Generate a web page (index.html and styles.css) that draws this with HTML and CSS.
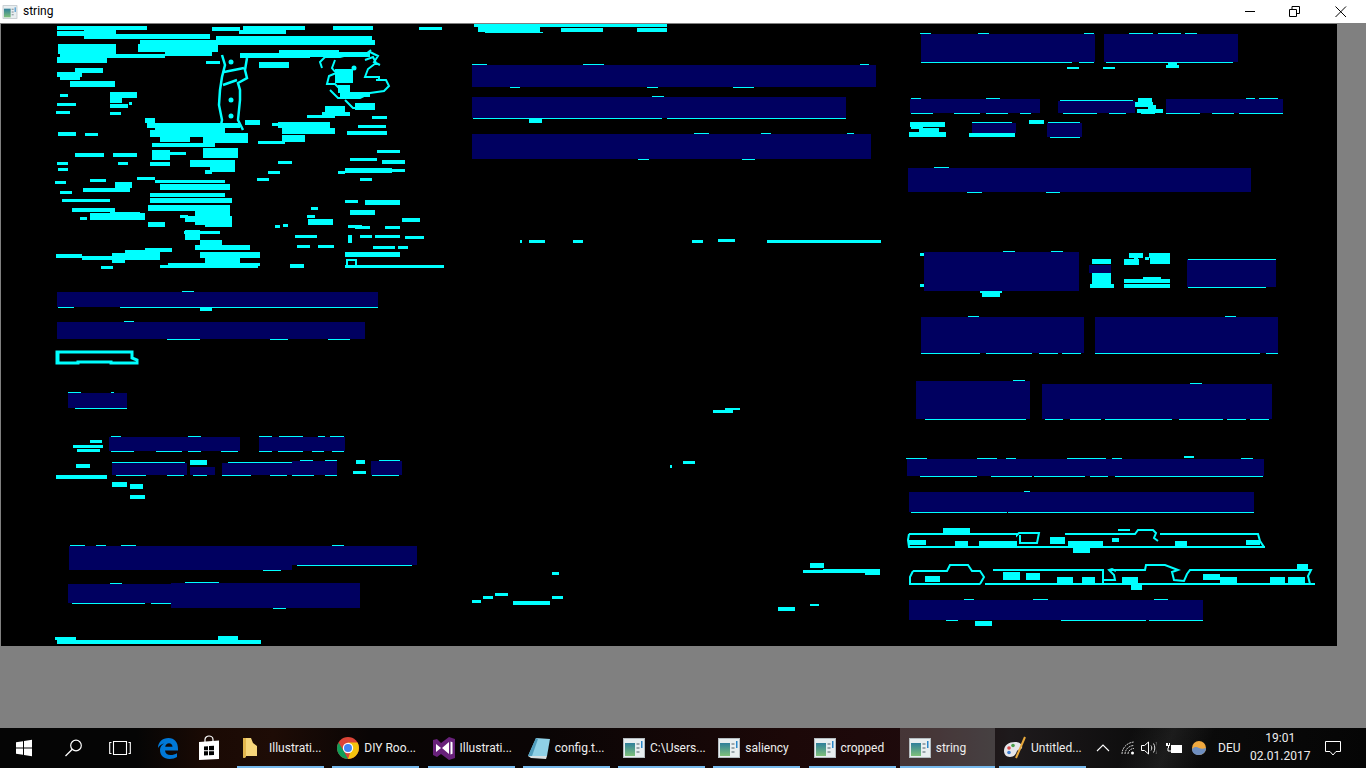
FILE: index.html
```html
<!DOCTYPE html>
<html lang="en">
<head>
<meta charset="utf-8">
<title>string</title>
<link rel="stylesheet" href="styles.css">
</head>
<body>
<svg class="defs" width="0" height="0" aria-hidden="true">
  <defs>
    <linearGradient id="pane" x1="0" y1="0" x2="0" y2="1">
      <stop offset="0" stop-color="#2f7f9a"/><stop offset="1" stop-color="#7fc07a"/>
    </linearGradient>
    <symbol id="appwin" viewBox="0 0 24 24">
      <rect x="1.500" y="2.500" width="21" height="19" fill="#e8eef0" stroke="#b4bcc0"/>
      <rect x="3" y="7" width="10" height="13" fill="url(#pane)"/>
      <rect x="14.500" y="7" width="3" height="2" fill="#9aa6ac"/>
      <rect x="14.500" y="11" width="3" height="2" fill="#9aa6ac"/>
      <rect x="14.500" y="15" width="3" height="2" fill="#9aa6ac"/>
      <rect x="19" y="5" width="1.500" height="7" fill="#2a86c8"/>
    </symbol>
  </defs>
</svg>

<header class="titlebar">
  <svg class="title-icon" viewBox="0 0 24 24"><use href="#appwin"/></svg>
  <span class="title-text">string</span>
  <div class="win-buttons">
    <button class="win-btn" aria-label="Minimize"><svg width="12" height="12" viewBox="0 0 12 12"><path d="M2 5.500h10" stroke="#000" fill="none"/></svg></button>
    <button class="win-btn" aria-label="Restore"><svg width="12" height="12" viewBox="0 0 12 12"><path d="M.500 3.500h7v7h-7zM3 3.500V.500h7.500v7H7.500" stroke="#000" fill="none"/></svg></button>
    <button class="win-btn" aria-label="Close"><svg width="12" height="12" viewBox="0 0 12 12"><path d="M.500.500l10.500 10.500M11 .500L.500 11" stroke="#000" fill="none"/></svg></button>
  </div>
</header>

<main class="workspace">
  <svg class="canvas" viewBox="1 24 1336 622" width="1336" height="622" shape-rendering="crispEdges">
    <path class="navy" d="M921 34h174v28h-174zM1104 34h134v28h-134zM910 99h130v14h-130zM1058 101h77v12h-77zM1166 99h117v14h-117zM972 123h44v10h-44zM1047 123h35v14h-35zM908 168h343v24h-343zM924 252h155v39h-155zM1089 265h22v8h-22zM1187 259h89v28h-89zM921 317h163v36h-163zM1095 317h183v36h-183zM916 381h114v38h-114zM1042 384h230v35h-230zM907 459h357v17h-357zM909 492h345v20h-345zM909 600h294v20h-294zM472 65h404v22h-404zM472 97h374v21h-374zM472 134h399v25h-399zM57 292h321v15h-321zM57 322h308v17h-308zM68 393h59v15h-59zM109 437h131v14h-131zM259 437h86v14h-86zM112 463h75v12h-75zM190 467h25v8h-25zM222 463h70v12h-70zM292 461h45v14h-45zM371 461h31v14h-31zM69 546h223v24h-223zM292 546h125v19h-125zM68 584h103v19h-103zM171 583h189v25h-189z"/>

    <!-- thin edges round the filled regions -->
    <path class="cyan" d="M920 33h11v1h-11zM978 33h11v1h-11zM1084 33h10v1h-10zM921 62h151v1h-151zM1079 62h15v1h-15zM1129 33h24v1h-24zM1158 33h23v1h-23zM1185 33h12v1h-12zM1106 62h127v1h-127zM911 98h10v1h-10zM986 98h14v1h-14zM911 113h22v1h-22zM954 113h26v1h-26zM986 113h22v1h-22zM1020 113h11v1h-11zM1060 100h73v1h-73zM1063 113h34v1h-34zM1109 113h17v1h-17zM1246 98h9v1h-9zM1259 98h19v1h-19zM1166 113h34v1h-34zM1212 113h22v1h-22zM1239 113h44v1h-44zM972 122h40v1h-40zM1048 122h32v1h-32zM1050 137h30v1h-30zM934 167h15v1h-15zM967 192h15v1h-15zM1046 192h14v1h-14zM1003 251h12v1h-12zM1051 251h12v1h-12zM1188 259h88v1h-88zM1188 287h78v1h-78zM968 316h11v1h-11zM921 353h59v1h-59zM986 353h46v1h-46zM1039 353h19v1h-19zM1062 353h19v1h-19zM1225 316h11v1h-11zM1095 353h165v1h-165zM1266 353h12v1h-12zM1013 380h12v1h-12zM925 419h101v1h-101zM1190 383h12v1h-12zM1045 419h18v1h-18zM1070 419h31v1h-31zM1105 419h67v1h-67zM1179 419h44v1h-44zM1227 419h19v1h-19zM1250 419h19v1h-19zM906 458h21v1h-21zM977 458h20v1h-20zM1006 458h10v1h-10zM1067 458h39v1h-39zM1112 458h10v1h-10zM1241 458h12v1h-12zM920 476h57v1h-57zM991 476h41v1h-41zM1034 476h51v1h-51zM1090 476h18v1h-18zM1115 476h148v1h-148zM1024 491h6v1h-6zM911 512h96v1h-96zM1008 512h246v1h-246zM964 599h10v1h-10zM1033 599h15v1h-15zM1154 599h14v1h-14zM946 620h12v1h-12zM1061 620h85v1h-85zM1149 620h54v1h-54zM472 64h15v1h-15zM583 64h21v1h-21zM860 64h9v1h-9zM510 87h10v1h-10zM647 87h11v1h-11zM733 87h21v1h-21zM652 96h12v1h-12zM473 118h189v1h-189zM667 118h179v1h-179zM694 133h15v1h-15zM761 133h10v1h-10zM847 133h7v1h-7zM638 159h11v1h-11zM742 159h13v1h-13zM58 307h16v1h-16zM120 307h258v1h-258zM182 291h12v1h-12zM124 321h10v1h-10zM167 339h33v1h-33zM270 339h18v1h-18zM328 339h22v1h-22zM68 392h13v1h-13zM111 392h3v1h-3zM75 408h52v1h-52zM111 436h10v1h-10zM188 436h13v1h-13zM111 451h23v1h-23zM156 451h26v1h-26zM188 451h13v1h-13zM221 451h17v1h-17zM259 436h13v1h-13zM279 436h24v1h-24zM318 436h7v1h-7zM330 436h14v1h-14zM259 451h13v1h-13zM278 451h25v1h-25zM312 451h12v1h-12zM332 451h12v1h-12zM112 462h73v1h-73zM116 475h30v1h-30zM167 475h17v1h-17zM193 475h14v1h-14zM228 462h64v1h-64zM222 475h29v1h-29zM270 475h17v1h-17zM292 475h22v1h-22zM325 475h12v1h-12zM300 460h13v1h-13zM325 460h12v1h-12zM379 460h21v1h-21zM372 475h27v1h-27zM70 545h15v1h-15zM96 545h10v1h-10zM121 545h15v1h-15zM332 545h12v1h-12zM263 570h18v1h-18zM297 565h115v1h-115zM110 583h12v1h-12zM72 603h73v1h-73zM151 603h20v1h-20zM185 582h34v1h-34zM273 608h13v1h-13z"/>

    <!-- solid blobs, right column -->
    <path class="cyan" d="M1067 67h12v2h-12zM1103 67h12v2h-12zM1168 63h9v2h-9zM1166 65h13v3h-13zM1138 98h14v4h-14zM1135 102h18v5h-18zM1148 105h8v4h-8zM1137 109h26v4h-26zM1141 113h14v1h-14zM910 122h35v5h-35zM911 127h12v2h-12zM909 132h37v5h-37zM919 128h20v5h-20zM969 133h46v4h-46zM1029 120h15v4h-15zM920 253h4v3h-4zM920 284h4v3h-4zM980 291h22v2h-22zM982 293h18v4h-18zM1092 259h19v5h-19zM1092 273h19v15h-19zM1090 284h24v4h-24zM1129 253h14v5h-14zM1124 259h15v6h-15zM1134 258h4v2h-4zM1149 253h21v5h-21zM1150 258h20v6h-20zM1145 257h4v3h-4zM1124 279h46v4h-46zM1124 284h46v4h-46zM1143 277h18v3h-18zM1184 456h10v2h-10zM975 621h17v5h-17z"/>

    <!-- solid blobs, middle column -->
    <path class="cyan" d="M474 24h193v3h-193zM478 27h62v5h-62zM485 32h58v1h-58zM561 28h42v4h-42zM637 28h30v4h-30zM529 119h13v4h-13zM520 240h2v3h-2zM529 240h16v3h-16zM573 240h10v3h-10zM692 240h11v3h-11zM718 239h17v3h-17zM767 240h114v3h-114zM725 408h15v2h-15zM713 410h20v3h-20zM683 461h12v3h-12zM670 465h2v3h-2zM552 572h7v3h-7zM472 600h9v3h-9zM483 596h10v3h-10zM495 593h13v3h-13zM513 601h37v4h-37zM552 596h11v3h-11zM810 563h14v5h-14zM803 570h20v3h-20zM823 569h57v4h-57zM865 571h15v4h-15zM778 607h17v4h-17zM810 604h9v2h-9z"/>

    <!-- solid blobs, bottom rows of the left column -->
    <path class="cyan" d="M200 308h12v3h-12zM90 440h12v3h-12zM73 445h30v3h-30zM77 449h23v3h-23zM76 464h14v4h-14zM56 475h51v4h-51zM112 482h15v5h-15zM130 484h13v5h-13zM130 495h15v4h-15zM190 460h17v5h-17zM356 460h9v4h-9zM353 471h13v3h-13zM57 640h204v4h-204zM55 637h21v3h-21zM218 636h20v4h-20z"/>

    <!-- dense upper-left field -->
    <path class="cyan blob" d="M58 27h88v2h-88zM58 32h26v3h-26zM85 30h30v4h-30zM85 35h124v3h-124zM213 28h26v2h-26zM244 27h60v2h-60zM240 31h45v2h-45zM334 27h38v2h-38zM420 28h21v1h-21zM217 37h154v2h-154zM141 41h233v3h-233zM59 45h56v8h-56zM61 54h53v3h-53zM58 58h48v4h-48zM101 55h63v2h-63zM139 45h78v6h-78zM166 53h45v2h-45zM241 54h68v3h-68zM280 51h58v5h-58zM331 53h38v3h-38zM207 62h12v1h-12zM260 63h28v4h-28zM76 69h26v3h-26zM58 73h23v3h-23zM61 77h18v2h-18zM71 82h43v4h-43zM61 95h6v1h-6zM111 93h25v4h-25zM111 99h10v3h-10zM58 104h17v1h-17zM111 105h16v2h-16zM130 103h1v1h-1zM57 112h12v1h-12zM111 113h9v1h-9zM59 133h16v2h-16zM86 134h11v1h-11zM146 119h8v3h-8zM148 124h91v3h-91zM156 129h68v3h-68zM151 131h68v5h-68zM161 136h28v5h-28zM153 144h61v2h-61zM204 134h43v8h-43zM246 121h13v3h-13zM273 124h4v1h-4zM279 123h50v4h-50zM283 129h51v4h-51zM348 132h38v2h-38zM259 142h25v1h-25zM283 136h21v5h-21zM76 154h27v2h-27zM114 154h22v2h-22zM153 151h16v8h-16zM169 153h16v1h-16zM151 163h18v2h-18zM58 163h9v1h-9zM119 163h8v1h-8zM59 169h8v1h-8zM204 149h33v8h-33zM191 161h43v5h-43zM211 168h23v3h-23zM206 171h5v2h-5zM279 162h12v1h-12zM269 172h10v1h-10zM378 151h21v1h-21zM351 159h25v1h-25zM383 161h21v2h-21zM346 169h45v3h-45zM339 172h5v1h-5zM393 170h11v1h-11zM361 179h10v1h-10zM258 179h10v1h-10zM56 182h9v1h-9zM91 180h14v1h-14zM84 189h45v2h-45zM116 183h15v4h-15zM138 178h16v1h-16zM156 181h68v1h-68zM161 185h68v4h-68zM61 192h10v1h-10zM151 194h73v2h-73zM63 200h46v1h-46zM151 199h80v3h-80zM149 206h80v4h-80zM196 211h33v13h-33zM73 209h41v2h-41zM81 218h5v1h-5zM91 214h53v5h-53zM111 213h28v4h-28zM181 216h6v1h-6zM186 217h45v4h-45zM206 223h25v3h-25zM149 223h15v3h-15zM186 231h13v3h-13zM185 232h34v1h-34zM186 235h13v4h-13zM201 241h20v8h-20zM196 246h53v3h-53zM201 253h58v4h-58zM346 201h11v1h-11zM366 201h33v3h-33zM351 211h23v3h-23zM312 208h5v1h-5zM308 216h6v1h-6zM309 220h23v4h-23zM276 226h3v1h-3zM284 225h3v1h-3zM296 236h20v1h-20zM298 246h11v1h-11zM319 246h14v1h-14zM349 226h12v1h-12zM356 227h13v1h-13zM403 219h16v2h-16zM386 227h13v1h-13zM361 236h10v1h-10zM376 236h23v1h-23zM406 237h17v1h-17zM374 247h20v1h-20zM399 247h8v1h-8zM349 236h2v6h-2zM346 253h53v3h-53zM57 255h24v2h-24zM83 257h76v2h-76zM113 254h11v8h-11zM126 251h33v6h-33zM146 249h25v2h-25zM102 267h10v1h-10zM161 266h96v1h-96zM169 264h90v1h-90zM206 256h33v8h-33zM291 265h12v2h-12zM346 266h97v1h-97zM336 70h16v12h-16zM339 86h10v6h-10zM341 93h28v3h-28zM356 104h18v5h-18zM323 113h26v2h-26zM308 116h26v1h-26zM326 107h18v7h-18zM373 117h13v1h-13zM359 126h26v1h-26z"/>

    <!-- outlined regions -->
    <g class="outline" shape-rendering="auto">
      <path class="thick" d="M222 55l3 10-3 12-2 13-1 15 3 15-2 10M247 58l-2 12 2 8-9 5 2 7v10l-2 20 5 10M224 72l20-4M223 85l14-5"/>
      <circle cx="231" cy="62" r="2.500" class="dot"/>
      <circle cx="231" cy="100" r="2.500" class="dot"/>
      <circle cx="231" cy="116" r="2.500" class="dot"/>
      <circle cx="354" cy="68" r="2.500" class="dot"/>
      <path d="M322 68l-2-6 5-5h15l12-3h14l5-4M335 60l-3 8 4 5-7 3-2 8h8l5 5M365 60l8-3 3 6-8 6-3 8h14v3M330 90l8 8h22l10-5 14-2 5-5-3-6h-10M345 100l8 8h18M370 52l8 4-4 6 6 3"/>
      <path d="M57 352h75v6l5 2v3H111v-1H78v1H57v-8zM58 352v10" stroke-width="3"/>
      <path d="M909 534h108v1l2-2h20l-2 10h-17v-8M1065 534h70l3-4h15l3 3-2 5 4 3M1160 534h98l2 7 4 6M909 534l-1 6 1 7h356"/>
      <path d="M913 571h34l3-6h18l4 6h8l4 6-4 7M993 570h110v14M1103 580h12l-1-5-5-5 3-1 4 2M1110 570h35l1-5h19l13 5-6 2 2 8 10 1 3-7 3-4h121l-3 6 2 8M913 571l-3 6v7h70M985 584h330"/>
      <path d="M347 267v-7h9v7"/>
    </g>

    <!-- blobs inside the outlined rows -->
    <path class="cyan" d="M908 540h18v5h-18zM955 541h13v5h-13zM979 541h21v5h-21zM999 541h18v5h-18zM1050 537h15v7h-15zM1068 541h35v5h-35zM1073 547h17v6h-17zM1112 538h7v4h-7zM1118 529h12v2h-12zM1175 541h12v5h-12zM1246 540h14v5h-14zM943 528h27v6h-27zM925 576h15v6h-15zM1003 572h17v8h-17zM1026 573h14v7h-14zM1057 577h16v6h-16zM1082 577h13v6h-13zM1122 577h16v6h-16zM1131 584h11v6h-11zM1203 574h17v6h-17zM1220 577h17v6h-17zM1270 577h15v6h-15zM1288 577h17v6h-17zM1297 564h11v5h-11z"/>
  </svg>
</main>

<footer class="taskbar">
  <div class="quick q-start">
    <svg width="18" height="18" viewBox="0 0 18 18"><path fill="#fff" d="M1 3.200l7-1v6.300H1zM9 2l8-1.200v7.700H9zM1 9.500h7v6.300l-7-1zM9 9.500h8v7.700L9 16z"/></svg>
  </div>
  <div class="quick q-search">
    <svg width="20" height="20" viewBox="0 0 20 20"><circle cx="12" cy="7.500" r="5.300" fill="none" stroke="#fff" stroke-width="1.200"/><path d="M8.300 11.300L1.500 18" stroke="#fff" stroke-width="1.300" fill="none"/></svg>
  </div>
  <div class="quick q-task">
    <svg width="22" height="16" viewBox="0 0 22 16"><path d="M4.500 1.500h13v13h-13zM2.500 2.500H.700v11h1.800M19.500 2.500h1.800v11h-1.800" fill="none" stroke="#fff" stroke-width="1.100"/></svg>
  </div>
  <div class="quick q-edge">
    <svg width="22" height="22" viewBox="0 0 22 22"><path fill="#0078d7" d="M1 11C1 5 5.500 1 11.500 1 17.500 1 21 5 21 12v1.500H8c.2 3 2.600 4.500 5.500 4.500 2.400 0 4.700-.7 6.500-1.800v3.900c-2 1.200-4.500 1.900-7.500 1.900C6.800 21.500 3 18.500 3 13c0-2.800 1.500-5 4-6.500C4.800 6.800 2.500 8.500 1 11zM8.200 9.800h7.300C15.400 7.500 14 6.200 12 6.200s-3.400 1.300-3.800 3.600z"/></svg>
  </div>
  <div class="quick q-store">
    <svg width="22" height="26" viewBox="0 0 22 26"><path fill="none" stroke="#fff" stroke-width="1.200" d="M7 7V4.500C7 2.500 9 1 11 1s4 1.500 4 3.500V8"/><path fill="#fff" d="M1 7l20-1.500V24L1 25z"/><path fill="#000" d="M6 11.500l4-.3v4H6zM11 11.100l5-.4v4.500h-5zM6 16.200h4v4l-4 .2zM11 16.200h5v3.800l-5 .2z"/></svg>
  </div>

  <div class="item">
    <svg class="item-icon" viewBox="0 0 24 24"><path fill="#f6d57a" d="M2 2h8l2 5 4 3v10l-11 0-1 2-2-1z"/><path fill="#e2b64e" d="M2 2h3v19l-3 1z"/></svg>
    <span class="item-label">Illustrati...</span>
  </div>
  <div class="item">
    <svg class="item-icon" viewBox="0 0 24 24"><circle cx="12" cy="12" r="11" fill="#db4437"/><path fill="#0f9d58" d="M12 23A11 11 0 0 1 2.500 6.500L8 15.500l4 7.500z"/><path fill="#f4c20d" d="M12 23a11 11 0 0 0 9.500-16.500H12l3.500 6z"/><circle cx="12" cy="12" r="5.200" fill="#fff"/><circle cx="12" cy="12" r="4" fill="#4285f4"/></svg>
    <span class="item-label">DIY Roo...</span>
  </div>
  <div class="item">
    <svg class="item-icon" viewBox="0 0 24 24"><path fill="#68217a" d="M1 4l4-1 4 4 8-6 6 2v19l-6 2-8-6-4 3-4-2z"/><path fill="#fff" d="M4 8l5 4-5 4zM17 6v12l-7-6zM18.500 5.500l2 .7v11.600l-2 .7z"/></svg>
    <span class="item-label">Illustrati...</span>
  </div>
  <div class="item">
    <svg class="item-icon" viewBox="0 0 24 24"><path fill="#8fd0e6" d="M9 2l14 1-3 17H1z"/><path fill="#4f9cbc" d="M1 20L9 2l2 1-6 17z"/><path fill="#d7dfe2" d="M1 20h19l-1 3-15-1z"/></svg>
    <span class="item-label">config.t...</span>
  </div>
  <div class="item">
    <svg class="item-icon"><use href="#appwin"/></svg>
    <span class="item-label">C:\Users...</span>
  </div>
  <div class="item">
    <svg class="item-icon"><use href="#appwin"/></svg>
    <span class="item-label">saliency</span>
  </div>
  <div class="item">
    <svg class="item-icon"><use href="#appwin"/></svg>
    <span class="item-label">cropped</span>
  </div>
  <div class="item item-active">
    <svg class="item-icon"><use href="#appwin"/></svg>
    <span class="item-label">string</span>
  </div>
  <div class="item">
    <svg class="item-icon" viewBox="0 0 24 24"><path fill="#e6e6ea" d="M1 15C1 9 6 6 12 6c5 0 8 3 7 6-1 2-4 1-5 3-1 3-3 6-7 6-4 0-6-3-6-6z"/><circle cx="6" cy="12" r="1.800" fill="#d94b4b"/><circle cx="10" cy="9.500" r="1.800" fill="#4aa04a"/><circle cx="6" cy="16.500" r="1.800" fill="#3f7ed0"/><path d="M22 1l-9 21" stroke="#e8a93c" stroke-width="2" fill="none"/></svg>
    <span class="item-label">Untitled...</span>
  </div>

  <div class="tray t-chevron">
    <svg width="14" height="8" viewBox="0 0 14 8"><path d="M1 7l6-6 6 6" fill="none" stroke="#fff" stroke-width="1.100"/></svg>
  </div>
  <div class="tray t-wifi">
    <svg width="14" height="14" viewBox="0 0 14 14"><path d="M1 13C1 7 6 1.500 13 1M4 13c0-4.500 4-8.500 9-8.500M7 13c0-3 2.500-5.500 6-5.500" fill="none" stroke="#cfcfcf" stroke-dasharray="2 .7"/><circle cx="11.500" cy="12" r="1.500" fill="#fff"/></svg>
  </div>
  <div class="tray t-volume">
    <svg width="16" height="14" viewBox="0 0 16 14"><path d="M.500 4.500h3l4-3.500v12l-4-3.500h-3z" fill="none" stroke="#fff"/><path d="M10 4.500c1 1.500 1 3.500 0 5M12.500 2.500c1.700 2.500 1.700 6.500 0 9" fill="none" stroke="#ddd"/><path d="M15 1c2 3.500 2 8.500 0 12" fill="none" stroke="#666"/></svg>
  </div>
  <div class="tray t-battery">
    <svg width="16" height="12" viewBox="0 0 16 12"><path fill="#fff" d="M5 3h11v8H5zM1 1h1v2h1V1h1v3H3v2H2V4H0V1z"/><path d="M2 6v3h3" fill="none" stroke="#fff"/></svg>
  </div>
  <div class="tray t-weather">
    <svg width="14" height="14" viewBox="0 0 14 14"><circle cx="7" cy="7" r="7" fill="#f0a93f"/><path fill="#6f8fc0" d="M0 8c3-3 5-2 7-1s4 1 7 0c0 4-3 7-7 7S0 12 0 8z"/></svg>
  </div>
  <div class="tray t-lang">DEU</div>
  <div class="tray t-clock">
    <span>19:01</span>
    <span>02.01.2017</span>
  </div>
  <div class="tray t-note">
    <svg width="16" height="15" viewBox="0 0 16 15"><path d="M.500.500h15v10H11l-3 3.500-3-3.500H.500z" fill="none" stroke="#fff"/></svg>
  </div>
</footer>
</body>
</html>
```

FILE: styles.css
```css
* {
  box-sizing: border-box;
}

html,
body {
  margin: 0;
  height: 768px;
  overflow: hidden;
}

body {
  display: flex;
  flex-direction: column;
  width: 1366px;
  background: #808080;
  font-family: Roboto, "Noto Sans", sans-serif;
  font-size: 12px;
}

.defs {
  position: absolute;
}

.titlebar {
  display: flex;
  align-items: center;
  flex: none;
  height: 24px;
  padding-left: 2px;
  background: #fff;
  border-bottom: 1px solid #808080;
  color: #000;
}

.title-icon {
  width: 16px;
  height: 16px;
}

.title-text {
  margin-left: 5px;
  line-height: 23px;
}

.win-buttons {
  display: flex;
  margin-left: auto;
  margin-right: 2px;
}

.win-btn {
  display: flex;
  align-items: center;
  justify-content: center;
  width: 46px;
  height: 23px;
  padding: 0;
  border: 0;
  background: none;
}

.workspace {
  flex: 1;
  padding-left: 1px;
}

.canvas {
  display: block;
  background: #000;
}

.navy {
  fill: #000060;
}

.cyan {
  fill: #0ff;
}

.blob {
  stroke: #0ff;
  stroke-width: 2;
  stroke-linejoin: round;
}

.outline {
  fill: none;
  stroke: #0ff;
  stroke-width: 2;
}

.thick {
  stroke-width: 2.5;
}

.dot {
  fill: #0ff;
  stroke: none;
}

.taskbar {
  display: flex;
  align-items: stretch;
  flex: none;
  height: 40px;
  color: #fff;
  background:
    linear-gradient(112deg, transparent 0 82%, rgba(150, 150, 150, 0.12) 85%, transparent 88%),
    linear-gradient(90deg, #050505 0, #050505 10%, #1a0a04 15%, #1e0c06 20%, #090505 27%, #0a0505 40%, #1c0808 58%, #1e0a0c 68%, #1e1a1c 74%, #0c0c0c 84%, #050505 100%);
}

.quick,
.tray {
  display: flex;
  align-items: center;
  justify-content: center;
  flex: none;
}

.q-start,
.q-search,
.q-task,
.q-edge {
  width: 48px;
}

.q-search svg {
  margin-left: 4px;
}

.q-store {
  width: 34px;
  margin-right: 7px;
}

.item {
  display: flex;
  align-items: center;
  flex: none;
  gap: 4px;
  width: 95.25px;
  padding-left: 8px;
  overflow: hidden;
  white-space: nowrap;
  color: #eee;
  background: linear-gradient(#76b9ed, #76b9ed) 4px 100% / 87px 2px no-repeat;
}

.item-active {
  background:
    linear-gradient(#76b9ed, #76b9ed) 0 100% / 100% 2px no-repeat,
    rgba(255, 255, 255, 0.18);
}

.item-icon {
  flex: none;
  width: 24px;
  height: 24px;
}

.t-chevron {
  width: 26px;
}

.t-wifi {
  width: 24px;
}

.t-volume {
  width: 18px;
}

.t-battery {
  width: 32px;
}

.t-weather {
  width: 18px;
}

.t-lang {
  width: 42px;
  color: #eee;
}

.t-clock {
  flex-direction: column;
  gap: 3px;
  width: 60px;
  padding-bottom: 2px;
  line-height: 15px;
  color: #eee;
}

.t-note {
  width: 46px;
}
```
